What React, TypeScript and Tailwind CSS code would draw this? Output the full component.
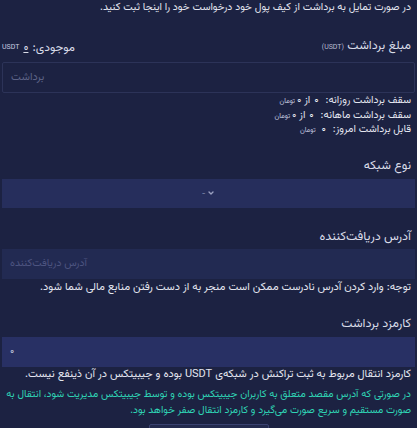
import { ChevronDown } from 'lucide-react';

const font = { fontFamily: '"Vazirmatn", "DejaVu Sans", "Noto Sans", sans-serif' };

function Toman() {
  return <span className="text-[7px] text-[#c9cde0] mr-0.5">تومان</span>;
}

function Zero() {
  return <span className="text-[#f1f2f8] mx-1">۰</span>;
}

export default function App() {
  return (
    <div
      dir="rtl"
      style={font}
      className="w-[417px] h-[428px] overflow-hidden bg-[#1c2242] text-[#e3e5ef] text-[11px] leading-[16px]"
    >
      <div className="px-[2px]">
        <p className="pr-1 text-[10.5px]">در صورت تمایل به برداشت از کیف پول خود درخواست خود را اینجا ثبت کنید.</p>

        {/* amount */}
        <div className="mt-[22px] flex items-end justify-between pr-1">
          <label className="text-[12.5px] text-[#d9dce8]">
            مبلغ برداشت <span className="text-[7px] text-[#b8bcd2]">(USDT)</span>
          </label>
          <div className="flex items-end gap-1 text-[12px] text-[#d9dce8]">
            <span>موجودی:</span>
            <span className="underline">۰</span>
            <span className="text-[7px] text-[#c9cde0]">USDT</span>
          </div>
        </div>
        <div className="mt-[6px] h-[31px] border border-[#2c3358] rounded-[2px] flex items-center px-2" dir="ltr">
          <span className="text-[11px] text-[#5d6386]">برداشت</span>
        </div>

        <div className="mt-[1px] pr-1 text-[10.5px] leading-[13.5px]">
          <div>
            سقف برداشت روزانه: <Zero />از ۰<Toman />
          </div>
          <div>
            سقف برداشت ماهانه: <Zero />از ۰<Toman />
          </div>
          <div>
            قابل برداشت امروز: <Zero />
            <Toman />
          </div>
        </div>

        {/* network */}
        <label className="block mt-[20px] pr-1 text-[12.5px] text-[#d9dce8]">نوع شبکه</label>
        <div className="mt-[5px] h-[29px] bg-[#262e5c] flex items-center justify-center gap-0.5 text-[#9aa0c0]">
          <ChevronDown className="w-[8px] h-[8px]" strokeWidth={4} />
          <span className="text-[8px]">-</span>
        </div>

        {/* address */}
        <label className="block mt-[21px] pr-1 text-[12.5px] text-[#d9dce8]">آدرس دریافت‌کننده</label>
        <div className="mt-[4px] h-[30px] bg-[#222a52] flex items-center px-2" dir="ltr">
          <span className="text-[10.5px] text-[#4d5480]">آدرس دریافت‌کننده</span>
        </div>
        <p className="mt-[1px] pr-1">
          توجه: وارد کردن آدرس نادرست ممکن است منجر به از دست رفتن منابع مالی شما شود.
        </p>

        {/* fee */}
        <label className="block mt-[20px] pr-1 text-[12.5px] text-[#d9dce8]">کارمزد برداشت</label>
        <div className="mt-[5px] h-[30px] bg-[#283064] flex items-center px-2" dir="ltr">
          <span className="text-[10px] text-[#c9cde0]">۰</span>
        </div>
        <p className="pr-1">
          کارمزد انتقال مربوط به ثبت تراکنش در شبکه‌ی USDT بوده و جیبیتکس در آن ذینفع نیست.
        </p>
        <p className="mt-[4px] pr-1 text-[10.3px] text-[#2fd3b4]">
          در صورتی که آدرس مقصد متعلق به کاربران جیبیتکس بوده و توسط جیبیتکس مدیریت شود، انتقال به صورت مستقیم و سریع صورت می‌گیرد و کارمزد انتقال صفر خواهد بود.
        </p>

        <div className="flex justify-center mt-[5px]">
          <button className="w-[120px] h-[30px] border border-[#3a4270] rounded-[2px] bg-[#232a4e]" />
        </div>
      </div>
    </div>
  );
}
